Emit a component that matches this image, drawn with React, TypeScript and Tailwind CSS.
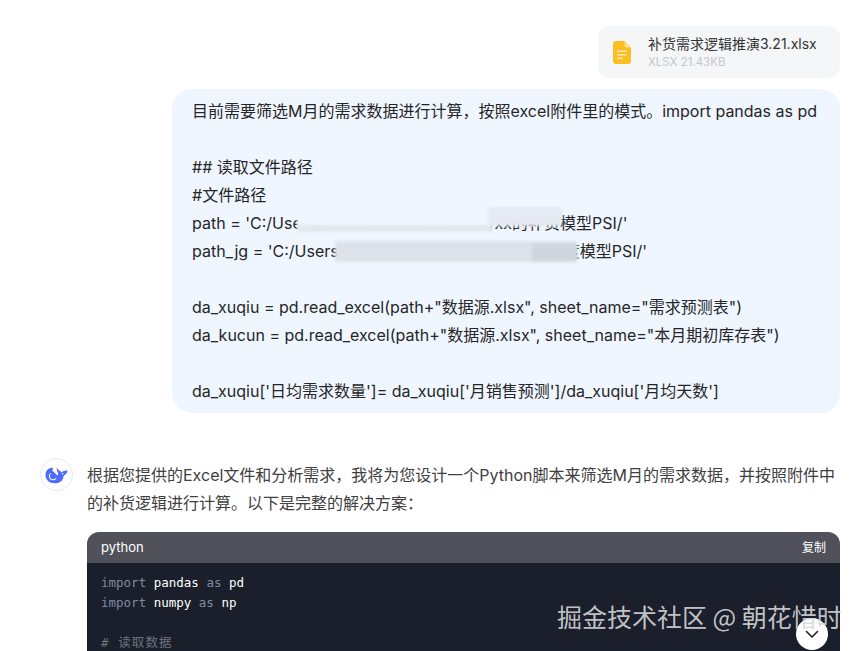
import React from "react";

const font = { fontFamily: 'Inter,"Noto Sans CJK SC",sans-serif' };

function Line({ children }: { children?: React.ReactNode }) {
  return <div className="h-7 leading-7 whitespace-nowrap">{children ?? "\u00a0"}</div>;
}

function Whale() {
  return (
    <svg viewBox="0 0 24 19" className="w-[23px] h-[18px]">
      <path
        fill="#4d6bfe"
        d="M.4 8.500C.8 4.500 4 1.700 8.500 2c-.6 1-1 2.400-.5 3.500 2 1 3.200 3 5 4.500.6-.8.900-1.500.8-2.500C12.800 6.300 12 4.300 12.300 1.500c.7 1.800 2 2.800 3.600 3.800.6.400 1 .9 1.200 1.600 1.300-1.300 3.200-1.900 6.500-2.400-.2 3.200-1.700 4.900-3.900 5.400-.6 4-2.300 6-4.500 7.200-2 1-4.800 1.200-7.300.9C3.200 17.500 0 13.500.4 8.500z"
      />
      <path d="M5.500 8c-1.600 2-1.300 4.600.5 5.800 1.800 1.100 3.800.9 5.200-.4" fill="none" stroke="#fff" strokeWidth="1.100" strokeLinecap="round" />
      <circle cx="18.500" cy="8.300" r=".8" fill="#fff" />
    </svg>
  );
}

function FileIcon() {
  return (
    <svg viewBox="0 0 18 23" className="w-[18px] h-[23px]">
      <path d="M3 0h8.500L18 6.500V20a3 3 0 0 1-3 3H3a3 3 0 0 1-3-3V3a3 3 0 0 1 3-3z" fill="#fbbf24" />
      <path d="M11.500 0L18 6.500h-4.500a2 2 0 0 1-2-2z" fill="#fde08a" />
      <rect x="4" y="9.500" width="10" height="1.500" rx=".7" fill="#fde9ae" />
      <rect x="4" y="13" width="10" height="1.500" rx=".7" fill="#fde9ae" />
      <rect x="4" y="16.500" width="6" height="1.500" rx=".7" fill="#fde9ae" />
    </svg>
  );
}

export default function App() {
  return (
    <div className="relative w-[862px] h-[651px] overflow-hidden bg-white text-[#262626]" style={font}>
      <div className="flex flex-col items-end pt-[26px] pr-[22px]">
        <div className="w-[242px] h-[52px] rounded-xl bg-[#f5f6f8] flex items-center pl-[15px]">
          <FileIcon />
          <div className="ml-[17px] mt-[1px]">
            <div className="text-sm leading-[19px] text-[#333] whitespace-nowrap">补货需求逻辑推演3.21.xlsx</div>
            <div className="text-[11.5px] leading-[18px] text-[#c4c7cc] whitespace-nowrap">XLSX 21.43KB</div>
          </div>
        </div>

        <div className="relative mt-[11px] w-[668px] h-[324px] rounded-[20px] bg-[#eff6ff] pl-5 pt-2 text-base">
          <Line>目前需要筛选M月的需求数据进行计算，按照excel附件里的模式。import pandas as pd</Line>
          <Line />
          <Line>## 读取文件路径</Line>
          <Line>#文件路径</Line>
          <Line>path = 'C:/Users/xxxxxxxxxxxxxxxi/xxx/xx的补货模型PSI/'</Line>
          <Line>path_jg = 'C:/Users/xxxxxxxxxxxxxxxxxxxxxxi/xx度模型PSI/'</Line>
          <Line />
          <Line>da_xuqiu = pd.read_excel(path+"数据源.xlsx", sheet_name="需求预测表")</Line>
          <Line>da_kucun = pd.read_excel(path+"数据源.xlsx", sheet_name="本月期初库存表")</Line>
          <Line />
          <Line>da_xuqiu['日均需求数量']= da_xuqiu['月销售预测']/da_xuqiu['月均天数']</Line>
          <div className="absolute left-[125px] top-[122px] w-[195px] h-[16px] bg-[#eff6ff] blur-[1px]" />
          <div className="absolute left-[125px] top-[136px] w-[195px] h-[7px] bg-[#e4e9f0] blur-[1px]" />
          <div className="absolute left-[316px] top-[118px] w-[74px] h-[19px] rounded bg-[#e6ebf3] blur-[1.5px]" />
          <div className="absolute left-[163px] top-[152px] w-[242px] h-[21px] bg-[#dde2ea] blur-[1.5px]" />
          <div className="absolute left-[360px] top-[155px] w-[44px] h-[17px] bg-[#d0d5dd] blur-[1.5px]" />
        </div>
      </div>

      <div className="flex mt-[48px] pl-10 pr-[22px]">
        <div className="w-[33px] h-[33px] -mt-[3px] rounded-full border border-[#e3e8fb] flex items-center justify-center shrink-0">
          <Whale />
        </div>
        <div className="ml-[14px] w-[753px]">
          <div className="text-base leading-7 text-[#404040]">
            根据您提供的Excel文件和分析需求，我将为您设计一个Python脚本来筛选M月的需求数据，并按照附件中的补货逻辑进行计算。以下是完整的解决方案：
          </div>
          <div className="mt-[15px] rounded-t-xl overflow-hidden">
            <div className="h-[31px] bg-[#50515b] flex items-center justify-between pl-[14px] pr-[14px] text-[13px] text-white">
              <span>python</span>
              <span className="text-xs">复制</span>
            </div>
            <div
              className="h-[200px] bg-[#1a1f2b] pl-[14px] pt-[10px] text-[12.5px] leading-5"
              style={{ fontFamily: '"DejaVu Sans Mono","Liberation Mono","Noto Sans CJK SC",monospace' }}
            >
              <div className="text-white font-medium"><span className="text-[#7d8ca3] font-normal">import</span> pandas <span className="text-[#7d8ca3] font-normal">as</span> pd</div>
              <div className="text-white font-medium"><span className="text-[#7d8ca3] font-normal">import</span> numpy <span className="text-[#7d8ca3] font-normal">as</span> np</div>
              <div className="h-5" />
              <div className="text-[#6b7280] tracking-[1.1px]"># 读取数据</div>
            </div>
          </div>
        </div>
      </div>

      <div className="absolute left-[796px] top-[618px] w-8 h-8 rounded-full bg-white flex items-center justify-center">
        <svg viewBox="0 0 16 16" className="w-4 h-4" fill="none" stroke="#222" strokeWidth="1.600" strokeLinecap="round" strokeLinejoin="round">
          <path d="M2.500 5.500 8 11l5.500-5.500" />
        </svg>
      </div>
      <div className="absolute left-[557px] top-[600px] text-[25px] leading-8 whitespace-nowrap text-[#d8d8da]/90" style={{ fontFamily: '"Noto Sans CJK SC",sans-serif' }}>
        掘金技术社区 @ 朝花惜时
      </div>
    </div>
  );
}
